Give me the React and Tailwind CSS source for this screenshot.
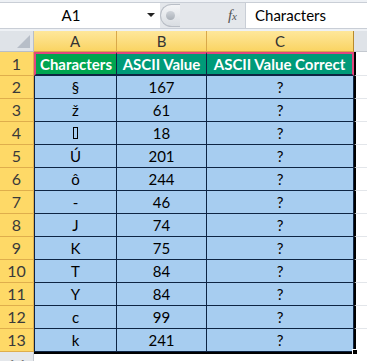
import React from "react";

const rows = [
  ["§", "167"],
  ["ž", "61"],
  ["box", "18"],
  ["Ú", "201"],
  ["ô", "244"],
  ["-", "46"],
  ["J", "74"],
  ["K", "75"],
  ["T", "84"],
  ["Y", "84"],
  ["c", "99"],
  ["k", "241"],
];

const font = { fontFamily: "Lato, 'Liberation Sans', sans-serif" };

function FormulaBar() {
  return (
    <div className="bg-[#e6e9ee]">
      <div className="h-[3px] border-b border-[#c9ced6] bg-[#eef1f5]" />
      <div className="flex h-[25px] items-stretch">
        {/* name box */}
        <div className="relative flex w-[160px] items-center bg-white">
          <span className="w-[142px] text-center text-[15px] text-black">A1</span>
          <span className="absolute left-[147px] top-[10px] h-0 w-0 border-x-[4px] border-t-[4px] border-x-transparent border-t-[#222]" />
        </div>
        {/* splitter */}
        <div className="flex w-[85px] items-center bg-[#e4e7eb]">
          <div className="flex h-[23px] w-[20px] items-center rounded-l-full border border-r-0 border-[#b9bec6] bg-gradient-to-b from-[#f4f5f7] to-[#d9dde2] pl-[5px]">
            <div className="h-[9px] w-[9px] rounded-full bg-gradient-to-b from-[#d0d4da] to-[#aab0b8]" />
          </div>
          <span
            className="ml-auto mr-[8px] text-[15px] italic text-[#555]"
            style={{ fontFamily: "'Liberation Serif', serif" }}
          >
            f<span className="text-[11px]">x</span>
          </span>
        </div>
        <div className="flex flex-1 items-center border-l border-[#c9ced6] bg-white pl-[9px] text-[15px] text-black">
          Characters
        </div>
      </div>
      <div className="h-[3px] border-t border-[#c9ced6] bg-[#eef1f5]" />
    </div>
  );
}

function ColHead({ children, last }) {
  return (
    <div
      className={`flex items-center justify-center border-b border-r border-[#d9a84a] bg-gradient-to-b from-[#fee79a] to-[#fad462] text-[15px] text-[#333] ${
        last ? "border-r-[#b88a2c]" : ""
      }`}
    >
      {children}
    </div>
  );
}

function RowHead({ n }) {
  return (
    <div className="flex items-center justify-center border-b border-r border-[#dfae4c] bg-[#fed967] text-[16px] text-[#3a3a3a]">
      {n}
    </div>
  );
}

function Cell({ children, first }) {
  return (
    <div
      className={`flex items-center justify-center border-b border-r border-[#0e2443] bg-[#a7cdf0] text-[15px] text-black ${
        first ? "border-l border-l-[#0e2443]" : ""
      }`}
    >
      {children}
    </div>
  );
}

export default function App() {
  return (
    <div className="h-[361px] w-[367px] overflow-hidden bg-white" style={font}>
      <FormulaBar />
      <div className="grid grid-cols-[34px_83px_90px_147px_1fr] grid-rows-[21px_24px_repeat(12,23px)_20px]">
        {/* header row */}
        <div className="relative border-b border-r border-[#b9bec6] bg-[#dfe3e8]">
          <span className="absolute bottom-[3px] right-[3px] h-0 w-0 border-b-[13px] border-l-[13px] border-b-[#b7bec8] border-l-transparent" />
        </div>
        <ColHead>A</ColHead>
        <ColHead>B</ColHead>
        <ColHead last>C</ColHead>
        <div className="border-b border-[#c4c9d0] bg-[#dfe3e8]" />

        {/* row 1 */}
        <RowHead n={1} />
        <div className="flex items-center justify-center border-y-2 border-l-2 border-r border-y-[#e2467f] border-l-[#e2467f] border-r-[#0e2443] border-b-[#0e2443] bg-[#00a550] text-[15px] font-bold text-white">
          Characters
        </div>
        <div className="flex items-center justify-center border-y-2 border-r border-t-[#e2467f] border-b-[#0e2443] border-r-[#0e2443] bg-[#009a78] text-[15px] font-bold text-white">
          ASCII Value
        </div>
        <div className="flex items-center justify-center border-y-2 border-r-2 border-t-[#e2467f] border-b-[#0e2443] border-r-[#e2467f] bg-[#009a78] text-[15px] font-bold text-white">
          ASCII Value Correct
        </div>
        <div className="border-b border-l-2 border-b-[#e3e6ea] border-l-black" />

        {rows.map(([ch, val], i) => (
          <React.Fragment key={i}>
            <RowHead n={i + 2} />
            <Cell first>
              {ch === "box" ? (
                <span className="inline-block h-[12px] w-[5px] border border-black" />
              ) : (
                ch
              )}
            </Cell>
            <Cell>{val}</Cell>
            <Cell>?</Cell>
            <div
              className={`relative border-l-2 border-l-black ${
                i === rows.length - 1 ? "border-b-0" : "border-b border-b-[#e3e6ea]"
              }`}
            >
              {i === rows.length - 1 && (
                <span className="absolute -bottom-[3px] -left-[4px] h-[6px] w-[6px] border border-white bg-black" />
              )}
            </div>
          </React.Fragment>
        ))}

        {/* row 14 */}
        <div className="flex items-start justify-center border-r border-[#c4c9d0] bg-[#e4e7eb] pt-[5px] text-[16px] leading-none text-[#777]">
          14
        </div>
        <div className="col-span-3 border-t-2 border-black" />
        <div className="bg-white" />
      </div>
    </div>
  );
}
